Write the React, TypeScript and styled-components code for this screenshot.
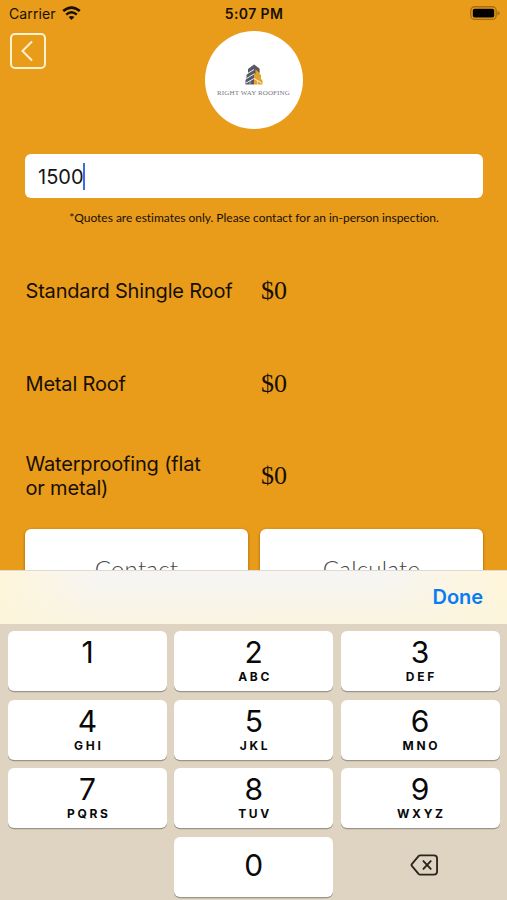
import React from 'react';
import styled, { createGlobalStyle } from 'styled-components';

const GlobalStyle = createGlobalStyle`
  * { box-sizing: border-box; }
  body { margin: 0; background: #e99c19; }
  button { border: 0; padding: 0; margin: 0; font: inherit; color: inherit; }
`;

const Screen = styled.main`
  position: relative;
  width: 507px;
  height: 900px;
  overflow: hidden;
  background: #e99c19;
  color: #170f04;
  font-family: Inter, 'Liberation Sans', sans-serif;
`;

const StatusBar = styled.header`
  display: grid;
  grid-template-columns: 1fr auto 1fr;
  align-items: center;
  height: 27px;
  padding: 0 7px 0 9px;
  font-size: 14px;
  line-height: 27px;
`;

const Carrier = styled.div`
  display: flex;
  align-items: center;
  gap: 6px;
  letter-spacing: 0.1px;
`;

const Clock = styled.div`
  font-weight: 600;
  font-size: 14px;
  letter-spacing: 0.4px;
  margin-right: 1px;
`;

const BatteryIcon = styled.svg`
  justify-self: end;
`;

const TopRow = styled.div`
  display: grid;
  grid-template-columns: 1fr 98px 1fr;
  align-items: start;
  height: 127px;
  padding: 4px 0 0;
`;

const BackButton = styled.button`
  display: grid;
  place-items: center;
  width: 36px;
  height: 36px;
  margin: 2px 0 0 10px;
  border: 2px solid #fff1d2;
  border-radius: 5px;
  background: transparent;
`;

const Logo = styled.div`
  display: flex;
  flex-direction: column;
  align-items: center;
  width: 98px;
  height: 98px;
  padding-top: 33px;
  border-radius: 50%;
  background: #fff;
`;

const LogoName = styled.div`
  margin-top: 3px;
  font: 7px/10px 'Liberation Serif', serif;
  letter-spacing: 0.12px;
  white-space: nowrap;
  color: #77777c;
`;

const Form = styled.section`
  padding: 0 24px 0 25px;
`;

const AreaField = styled.div`
  display: flex;
  align-items: center;
  height: 44px;
  padding: 2px 12px 0 13px;
  border-radius: 6px;
  background: #fff;
  color: #151515;
  font-size: 20px;
  letter-spacing: 0;
`;

const Caret = styled.span`
  width: 2px;
  height: 27px;
  margin-left: -1px;
  margin-top: -2px;
  background: #4568e2;
`;

const Note = styled.p`
  margin: 11px 0 0;
  font: 12px/18px Lato, sans-serif;
  letter-spacing: -0.02px;
  text-align: center;
  white-space: nowrap;
`;

const Quotes = styled.div`
  display: grid;
  grid-auto-rows: 92.5px;
  margin-top: 18px;
`;

const Quote = styled.div`
  display: grid;
  grid-template-columns: 210px 1fr;
  column-gap: 26px;
  align-items: center;
`;

const QuoteName = styled.div`
  padding-left: 0.5px;
  font-size: 20px;
  line-height: 24px;
  letter-spacing: -0.18px;
  white-space: pre-line;
`;

const Price = styled.div`
  font: 26px/30px 'Liberation Serif', serif;
`;

const Actions = styled.div`
  display: grid;
  grid-template-columns: 1fr 1fr;
  gap: 12px;
  margin-top: 6px;
`;

const Action = styled.button`
  height: 78px;
  padding-top: 2px;
  border-radius: 6px;
  background: #fff;
  box-shadow: 0 1px 3px rgba(73, 45, 0, 0.55);
  color: #444;
  font: 300 24px/30px Lato, sans-serif;
  letter-spacing: 0.25px;
`;

const Keyboard = styled.section`
  position: absolute;
  inset: 570px 0 0;
  background: #dfd4c2;
`;

const Accessory = styled.div`
  display: flex;
  align-items: center;
  justify-content: flex-end;
  height: 54px;
  padding: 0 24px 2px;
  border-top: 1px solid #dfdbd1;
  background:
    linear-gradient(to bottom, rgba(251, 245, 220, 0) 20%, rgba(251, 245, 220, 0.75)),
    linear-gradient(to right, #fff5da, #f6f5f1 18%, #f6f5f1 76%, #fff5da);
`;

const Done = styled.button`
  background: transparent;
  color: #087cf5;
  font-size: 20px;
  font-weight: 600;
  letter-spacing: -0.05px;
`;

const Keys = styled.div`
  display: grid;
  grid-template-columns: repeat(3, 1fr);
  grid-auto-rows: 60px;
  gap: 8.6px 7.3px;
  padding: 7px 7.5px 0 8px;
`;

const Key = styled.button<{ $plain?: boolean; $center?: boolean }>`
  display: flex;
  flex-direction: column;
  align-items: center;
  justify-content: ${({ $center }) => ($center ? 'center' : 'flex-start')};
  padding: ${({ $center, $plain }) => ($center ? ($plain ? '0 0 4px 8px' : '0 0 4px') : '4px 0 0')};
  border-radius: 6px;
  background: ${({ $plain }) => ($plain ? 'transparent' : '#fff')};
  box-shadow: ${({ $plain }) => ($plain ? 'none' : '0 1.3px 0 #9b948a')};
  color: #090909;
`;

const Digit = styled.span`
  font-size: 30px;
  line-height: 34px;
`;

const Letters = styled.span`
  margin-top: 1px;
  margin-right: -2.7px;
  font-size: 12px;
  font-weight: 700;
  line-height: 14px;
  letter-spacing: 2.7px;
`;

const quotes = ['Standard Shingle Roof', 'Metal Roof', 'Waterproofing (flat\nor metal)'];

const keypad = [
  ['1', ''], ['2', 'ABC'], ['3', 'DEF'],
  ['4', 'GHI'], ['5', 'JKL'], ['6', 'MNO'],
  ['7', 'PQRS'], ['8', 'TUV'], ['9', 'WXYZ'],
];

const Wifi = () => (
  <svg width="19" height="15" viewBox="0 0 19 15" fill="none" stroke="#170f04">
    <path d="M1.2 5.1Q9.5-2 17.8 5.1" strokeWidth="2.6" />
    <path d="M4.2 8.6Q9.5 4.1 14.8 8.6" strokeWidth="2.4" />
    <path d="M6.6 11.1Q9.5 8.8 12.4 11.1L9.5 14Z" fill="#170f04" stroke="none" />
  </svg>
);

const Battery = () => (
  <BatteryIcon width="30" height="15" viewBox="0 0 30 15">
    <rect x=".8" y=".8" width="25.4" height="12.6" rx="4" fill="none" stroke="#a66e14" strokeWidth="1.4" />
    <rect x="2.8" y="2.8" width="21.4" height="8.8" rx="1.8" fill="#030200" />
    <path d="M27.5 4.8Q29.8 6 29.8 7.2T27.5 9.6Z" fill="#a66e14" />
  </BatteryIcon>
);

const Tower = () => (
  <svg width="18" height="21" viewBox="0 0 18 21">
    <path d="M9 .5L3 5V9.5L1.5 11V15L.5 16V20.5H9Z" fill="#555866" />
    <path d="M9 .5L14.5 4.5V9.5L16 11V15L17.5 16.5V20.5H9Z" fill="#e3a12d" />
    <path d="M2.5 9.5L9 5.5M1.5 14.5L9 10M1 19L9 14.5L16.5 19" fill="none" stroke="#fff" strokeWidth=".9" />
    <path d="M5 17V20.5M12.5 17V20.5" stroke="#fff" strokeWidth=".5" />
    <path d="M9 .5L14.5 4.7V9L10.5 5.2V10L9 9Z" fill="#555866" />
  </svg>
);

const Delete = () => (
  <svg width="29" height="22" viewBox="0 0 30 24" fill="none" stroke="#2a241c" strokeWidth="2" strokeLinejoin="round" strokeLinecap="round">
    <path d="M10.2 1.5H25.2Q28.7 1.5 28.7 5V19Q28.7 22.5 25.2 22.5H10.2Q9.3 22.5 8.5 21.6L1.2 13Q.4 12 1.2 11L8.5 2.4Q9.3 1.5 10.2 1.5Z" />
    <path d="M13.8 7.7L21.8 16.3M21.8 7.7L13.8 16.3" />
  </svg>
);

export default function App() {
  return (
    <Screen>
      <GlobalStyle />
      <StatusBar>
        <Carrier>Carrier<Wifi /></Carrier>
        <Clock>5:07 PM</Clock>
        <Battery />
      </StatusBar>
      <TopRow>
        <BackButton aria-label="Back">
          <svg width="14" height="22" viewBox="0 0 14 22">
            <path d="M11 1.5L1.5 11L11 20.5" fill="none" stroke="#fff1d2" strokeWidth="2" />
          </svg>
        </BackButton>
        <Logo>
          <Tower />
          <LogoName>RIGHT WAY ROOFING</LogoName>
        </Logo>
      </TopRow>
      <Form>
        <AreaField>1500<Caret /></AreaField>
        <Note>*Quotes are estimates only. Please contact for an in-person inspection.</Note>
        <Quotes>
          {quotes.map((name) => (
            <Quote key={name}>
              <QuoteName>{name}</QuoteName>
              <Price>$0</Price>
            </Quote>
          ))}
        </Quotes>
        <Actions>
          <Action>Contact</Action>
          <Action>Calculate</Action>
        </Actions>
      </Form>
      <Keyboard>
        <Accessory><Done>Done</Done></Accessory>
        <Keys>
          {keypad.map(([digit, letters]) => (
            <Key key={digit}>
              <Digit>{digit}</Digit>
              {letters && <Letters>{letters}</Letters>}
            </Key>
          ))}
          <span />
          <Key $center><Digit>0</Digit></Key>
          <Key $plain $center aria-label="Delete"><Delete /></Key>
        </Keys>
      </Keyboard>
    </Screen>
  );
}
